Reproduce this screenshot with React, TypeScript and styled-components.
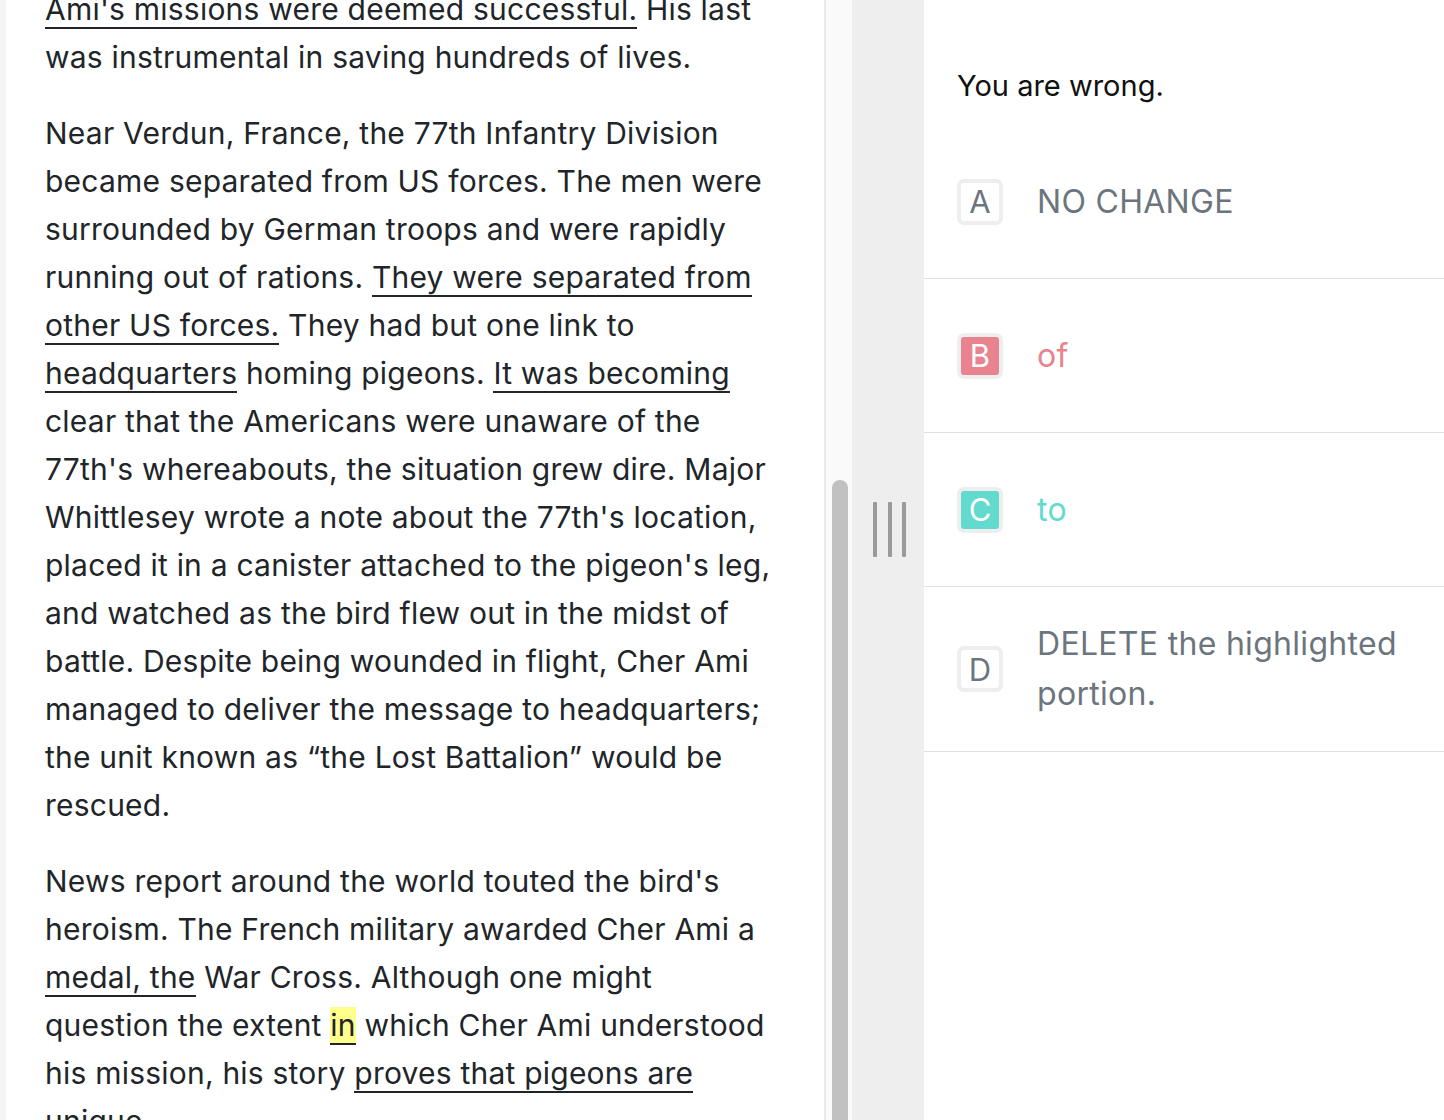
import React from "react";
import styled, { createGlobalStyle } from "styled-components";

const Global = createGlobalStyle`
  html, body { margin: 0; padding: 0; background: #ffffff; }
  body { font-family: Inter, "Noto Sans", sans-serif; -webkit-font-smoothing: antialiased; }
  * { box-sizing: border-box; }
`;

const Page = styled.div`
  display: flex;
  height: 1120px;
  width: 1444px;
  overflow: hidden;
  background: #ffffff;
`;

const EdgeStrip = styled.div`
  flex: 0 0 6px;
  background: #f4f4f4;
`;

const Passage = styled.div`
  flex: 0 0 818px;
  padding: 0 44px 0 39px;
  overflow: hidden;
  color: #212529;
  font-family: Inter, "Noto Sans", sans-serif;
  font-size: 30px;
  line-height: 48px;
  letter-spacing: 0.22px;
`;

const PassageInner = styled.div`
  margin-top: -15px;
`;

const Paragraph = styled.p`
  margin: 0 0 28px 0;
`;

const Marked = styled.span<{ $active?: boolean }>`
  border-bottom: 2px solid #212529;
  background: ${(p) => (p.$active ? "#ffff8c" : "transparent")};
`;

const ScrollTrack = styled.div`
  flex: 0 0 28px;
  background: #fafafa;
  border-left: 2px solid #e9e9e9;
  padding: 480px 4px 0 6px;
  display: flex;
  flex-direction: column;
`;

const ScrollThumb = styled.div`
  width: 16px;
  flex: 1;
  background: #c1c1c1;
  border-radius: 8px 8px 0 0;
`;

const Splitter = styled.div`
  flex: 0 0 72px;
  background: #eeeeee;
  display: flex;
  justify-content: flex-start;
  padding: 502px 0 0 21px;
`;

const Grip = styled.div`
  display: flex;
  gap: 10.5px;
  height: 55px;
`;

const GripBar = styled.div`
  width: 4px;
  height: 55px;
  background: #9a9a9a;
  border-radius: 1px;
`;

const Answers = styled.div`
  flex: 1;
  display: flex;
  flex-direction: column;
  font-family: Inter, "Noto Sans", sans-serif;
`;

const Verdict = styled.div`
  padding: 66px 33px 19px 33px;
  font-size: 29px;
  line-height: 40px;
  color: #111111;
`;

const Choice = styled.div`
  display: flex;
  align-items: center;
  min-height: 154px;
  padding: 32px 30px 32px 33px;
  border-bottom: 1px solid #dee2e6;
`;

const Letter = styled.div<{ $fill?: string }>`
  flex: 0 0 46px;
  width: 46px;
  height: 46px;
  border: 4px solid #eeeeee;
  border-radius: 7px;
  background: ${(p) => p.$fill || "#ffffff"};
  color: ${(p) => (p.$fill ? "#ffffff" : "#6c757d")};
  display: flex;
  align-items: center;
  justify-content: center;
  font-size: 31px;
  line-height: 1;
  margin-right: 34px;
`;

const ChoiceText = styled.div<{ $color: string }>`
  font-size: 32px;
  letter-spacing: 0.3px;
  line-height: 50px;
  color: ${(p) => p.$color};
`;

const GRAY = "#6c757d";
const PINK = "#e8838f";
const TEAL = "#62dbce";

const choices = [
  { letter: "A", text: "NO CHANGE", color: GRAY },
  { letter: "B", text: "of", color: PINK, fill: PINK },
  { letter: "C", text: "to", color: TEAL, fill: TEAL },
  { letter: "D", text: "DELETE the highlighted portion.", color: GRAY },
];

export default function App() {
  return (
    <>
      <Global />
      <Page>
        <EdgeStrip />
        <Passage>
          <PassageInner>
            <Paragraph>
              <Marked>Ami's missions were deemed successful.</Marked> His last was
              instrumental in saving hundreds of lives.
            </Paragraph>
            <Paragraph>
              Near Verdun, France, the 77th Infantry Division became separated from US
              forces. The men were surrounded by German troops and were rapidly running
              out of rations. <Marked>They were separated from other US forces.</Marked>{" "}
              They had but one link to <Marked>headquarters</Marked> homing pigeons.{" "}
              <Marked>It was becoming</Marked> clear that the Americans were unaware of
              the 77th's whereabouts, the situation grew dire. Major Whittlesey wrote a
              note about the 77th's location, placed it in a canister attached to the
              pigeon's leg, and watched as the bird flew out in the midst of battle.
              Despite being wounded in flight, Cher Ami managed to deliver the message to
              headquarters; the unit known as “the Lost Battalion” would be rescued.
            </Paragraph>
            <Paragraph>
              News report around the world touted the bird's heroism. The French military
              awarded Cher Ami a <Marked>medal, the</Marked> War Cross. Although one might
              question the extent <Marked $active>in</Marked> which Cher Ami understood his
              mission, his story <Marked>proves that pigeons are unique.</Marked>
            </Paragraph>
          </PassageInner>
        </Passage>
        <ScrollTrack>
          <ScrollThumb />
        </ScrollTrack>
        <Splitter>
          <Grip>
            <GripBar />
            <GripBar />
            <GripBar />
          </Grip>
        </Splitter>
        <Answers>
          <Verdict>You are wrong.</Verdict>
          {choices.map((c) => (
            <Choice key={c.letter}>
              <Letter $fill={c.fill}>{c.letter}</Letter>
              <ChoiceText $color={c.color}>{c.text}</ChoiceText>
            </Choice>
          ))}
        </Answers>
      </Page>
    </>
  );
}
